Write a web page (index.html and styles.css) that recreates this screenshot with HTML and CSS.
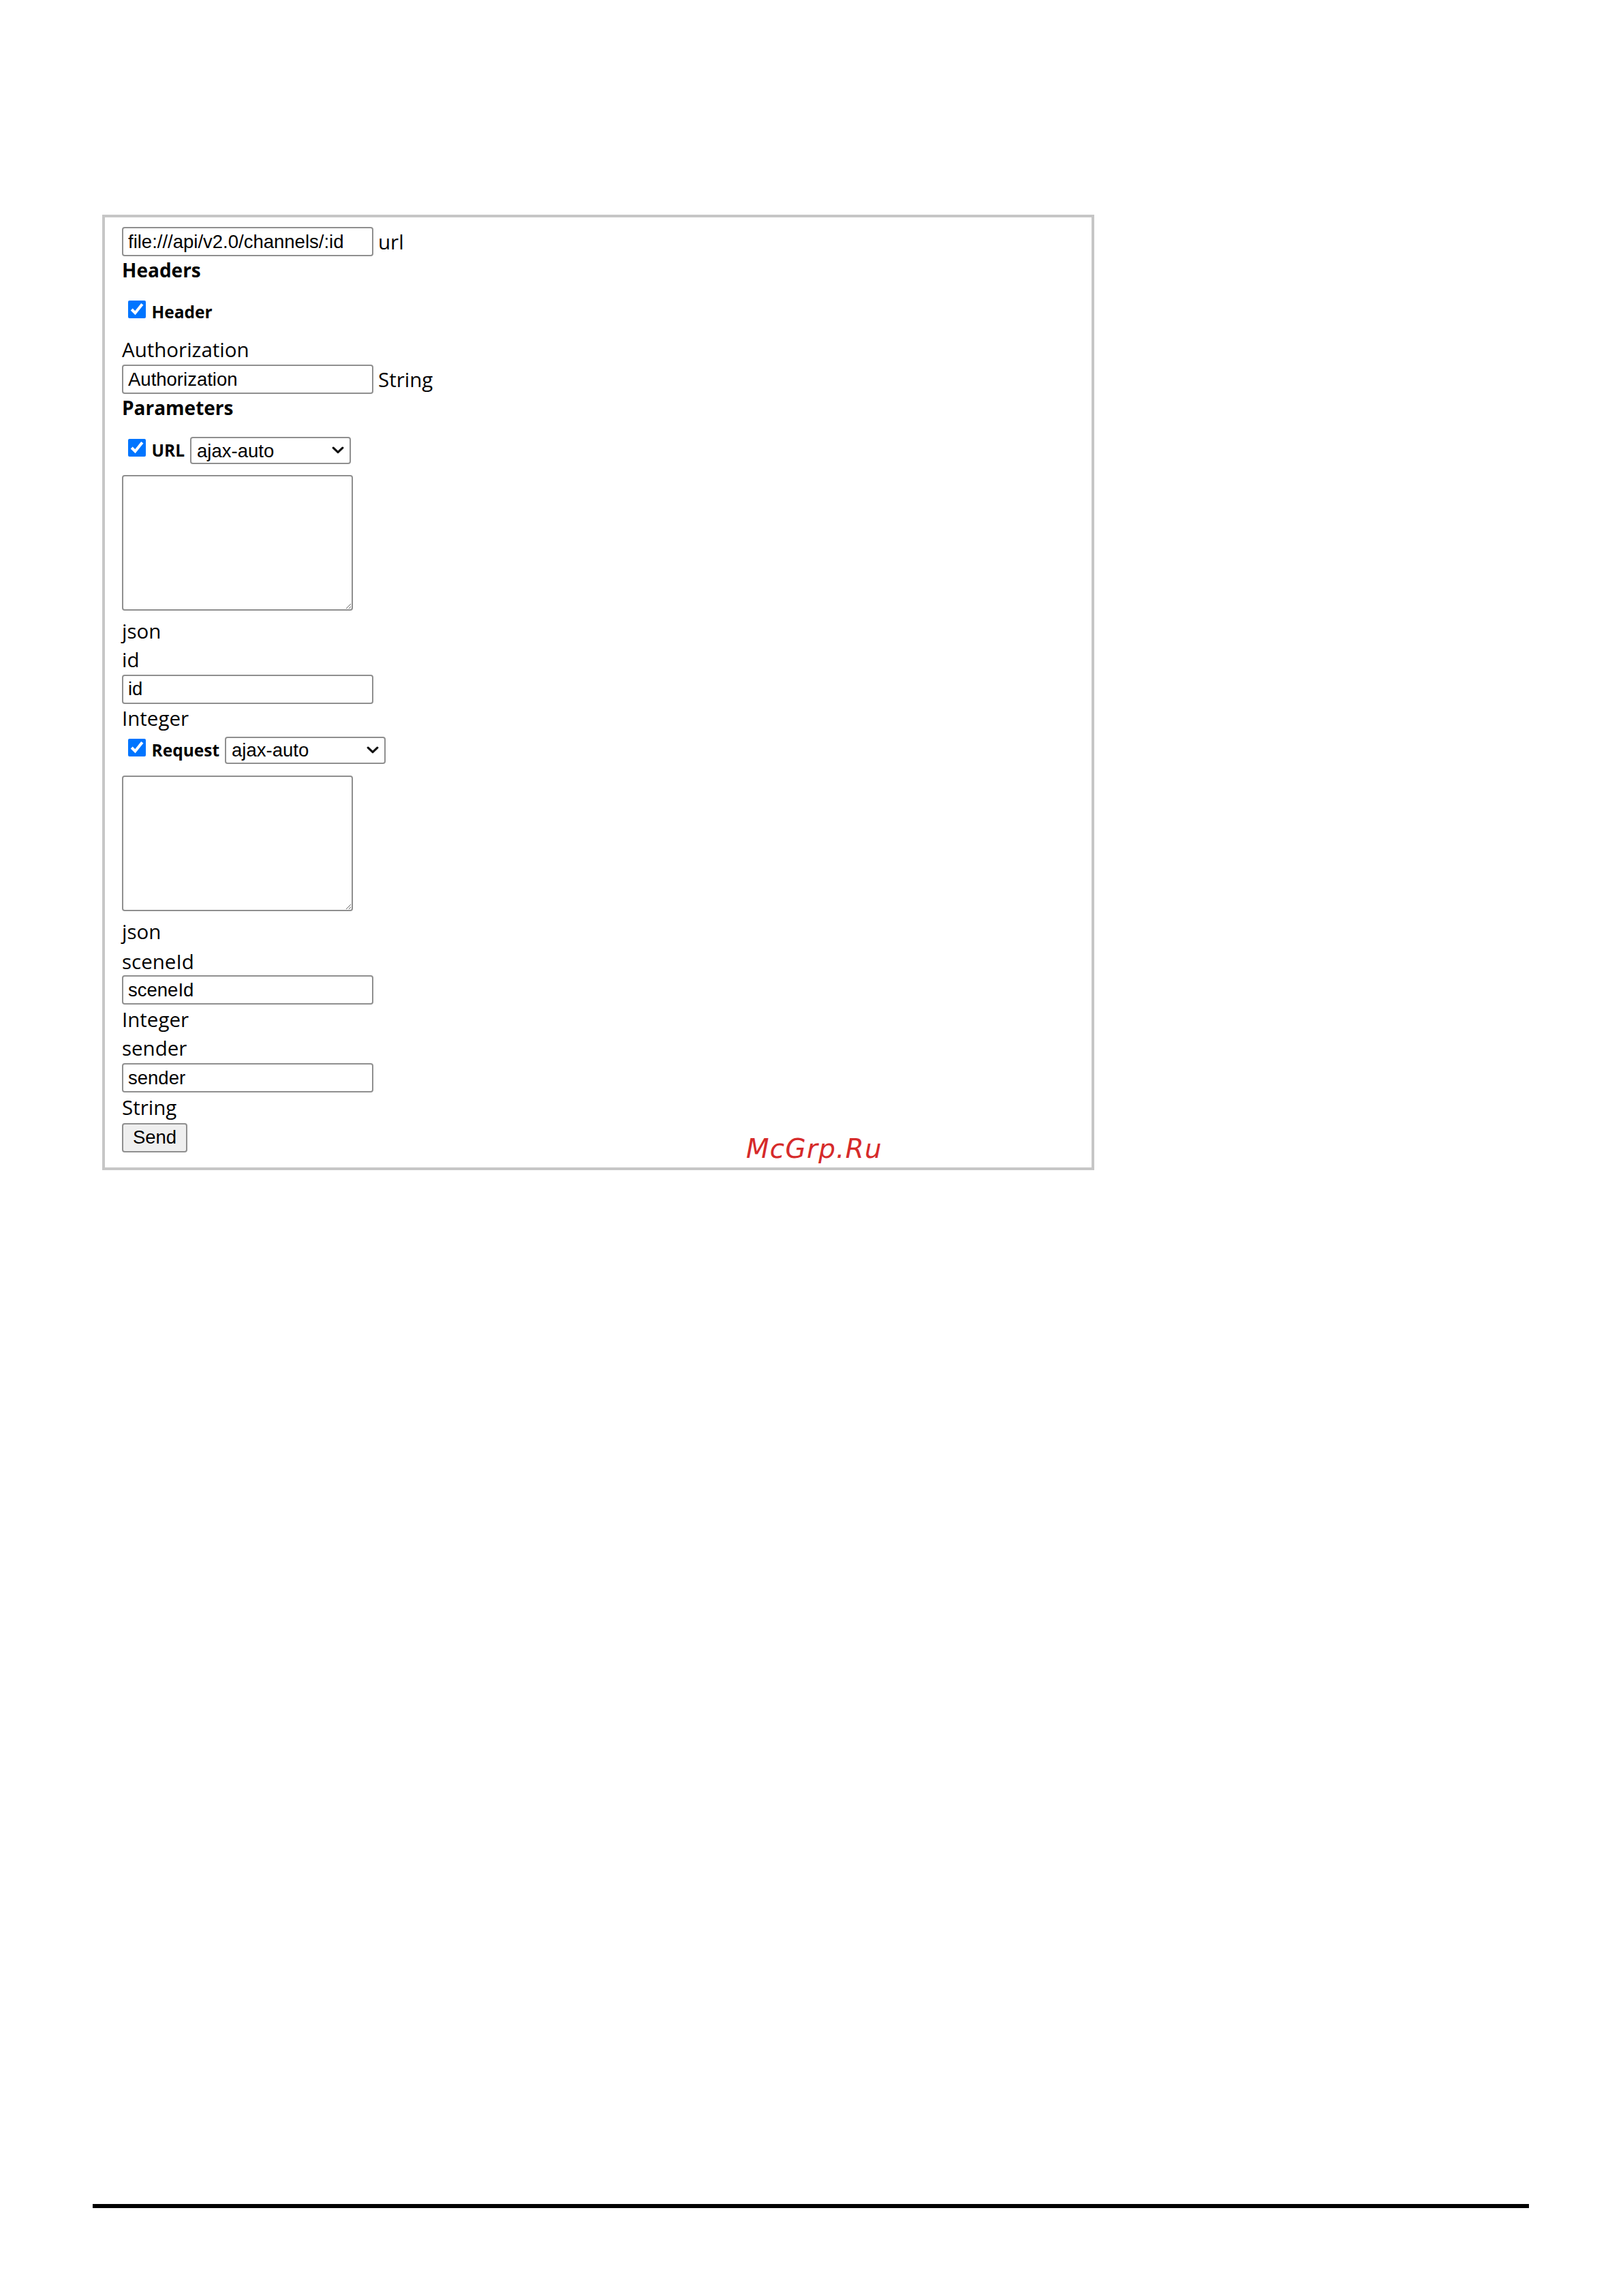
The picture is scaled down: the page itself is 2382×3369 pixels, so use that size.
FILE: index.html
```html
<!DOCTYPE html>
<html lang="en">
<head>
<meta charset="utf-8">
<title>API request form</title>
<link rel="stylesheet" href="styles.css">
</head>
<body>
<div class="frame">
  <div class="field-row">
    <input class="text-input" type="text" value="file:///api/v2.0/channels/:id">
    <span class="label">url</span>
  </div>
  <div class="heading">Headers</div>
  <div class="check-row check-row--header">
    <input class="check" type="checkbox" checked>
    <span class="check-label">Header</span>
  </div>
  <div class="label">Authorization</div>
  <div class="field-row field-row--after-label">
    <input class="text-input" type="text" value="Authorization">
    <span class="label">String</span>
  </div>
  <div class="heading">Parameters</div>
  <div class="check-row check-row--url">
    <input class="check" type="checkbox" checked>
    <span class="check-label">URL</span>
    <span class="select-wrap">
      <select class="select"><option>ajax-auto</option></select>
      <svg class="chevron" viewBox="0 0 18 11" aria-hidden="true"><polyline points="2.2,2.2 9,8.6 15.8,2.2" fill="none" stroke="#111" stroke-width="3.2" stroke-linecap="round" stroke-linejoin="round"/></svg>
    </span>
  </div>
  <textarea class="json-area json-area--url"></textarea>
  <div class="label label--after-area">json</div>
  <div class="label">id</div>
  <div class="field-row field-row--after-label">
    <input class="text-input" type="text" value="id">
  </div>
  <div class="label">Integer</div>
  <div class="check-row check-row--request">
    <input class="check" type="checkbox" checked>
    <span class="check-label">Request</span>
    <span class="select-wrap">
      <select class="select"><option>ajax-auto</option></select>
      <svg class="chevron" viewBox="0 0 18 11" aria-hidden="true"><polyline points="2.2,2.2 9,8.6 15.8,2.2" fill="none" stroke="#111" stroke-width="3.2" stroke-linecap="round" stroke-linejoin="round"/></svg>
    </span>
  </div>
  <textarea class="json-area json-area--request"></textarea>
  <div class="label label--after-area">json</div>
  <div class="label label--scene">sceneId</div>
  <div class="field-row">
    <input class="text-input" type="text" value="sceneId">
  </div>
  <div class="label label--spaced">Integer</div>
  <div class="label label--spaced">sender</div>
  <div class="field-row field-row--after-label">
    <input class="text-input" type="text" value="sender">
  </div>
  <div class="label label--spaced">String</div>
  <button class="send" type="button">Send</button>
  <div class="watermark">McGrp.Ru</div>
</div>
<div class="page-rule"></div>
</body>
</html>
```

FILE: styles.css
```css
* {
  box-sizing: border-box;
}

body {
  margin: 0;
  padding-top: 315px;
  background: #fff;
  color: #000;
  font-family: "Open Sans", "Noto Sans", sans-serif;
}

.frame {
  position: relative;
  margin-left: 150px;
  width: 1456px;
  border: 4px solid #c6c6c6;
  padding: 14px 0 22px 25px;
}

.field-row {
  display: flex;
  align-items: center;
  gap: 7px;
  height: 43px;
}

.field-row--after-label {
  margin-top: 1.5px;
}

.text-input {
  width: 369px;
  height: 43px;
  margin: 0;
  padding: 0 7px;
  border: 2px solid #8f8f8f;
  border-radius: 4px;
  background: #fff;
  color: #000;
  font: 27.5px "Liberation Sans", Arial, sans-serif;
}

.label {
  font-size: 29.5px;
  line-height: 41.5px;
}

.label--after-area {
  margin-top: 9.4px;
}

.label--scene {
  margin-top: 2px;
}

.label--spaced {
  margin-top: 0.7px;
}

.heading {
  font-size: 28px;
  font-weight: 700;
  line-height: 41.5px;
}

.check-row {
  display: flex;
  align-items: center;
  height: 40px;
}

.check-row--header {
  margin: 20.5px 0 14px;
}

.check-row--url {
  margin-top: 21.5px;
}

.check-row--request {
  margin-top: 6.5px;
}

.check {
  width: 26px;
  height: 26px;
  margin: 0 9px 8px 8.5px;
  accent-color: #0075ff;
}

.check-label {
  font-size: 24.5px;
  font-weight: 700;
  line-height: 40px;
}

.select-wrap {
  position: relative;
  display: inline-block;
  margin-left: 8px;
  height: 40px;
}

.select {
  appearance: none;
  -webkit-appearance: none;
  width: 236px;
  height: 40px;
  margin: 0;
  padding: 0 0 0 8px;
  border: 2px solid #8f8f8f;
  border-radius: 4px;
  background: #fff;
  color: #000;
  font: 27.5px "Liberation Sans", Arial, sans-serif;
}

.chevron {
  position: absolute;
  right: 10px;
  top: 14px;
  width: 18px;
  height: 11px;
  pointer-events: none;
}

.json-area {
  display: block;
  width: 339px;
  height: 199px;
  margin: 16px 0 0;
  border: 2px solid #8f8f8f;
  border-radius: 4px;
  background: #fff;
  resize: both;
}

.json-area--request {
  margin-top: 17px;
}

.send {
  display: block;
  width: 96px;
  height: 43px;
  margin-top: 2.5px;
  padding: 0;
  border: 2px solid #8f8f8f;
  border-radius: 4px;
  background: #efefef;
  color: #000;
  font: 27.5px "Liberation Sans", Arial, sans-serif;
}

.watermark {
  position: absolute;
  left: 941px;
  top: 1347px;
  color: #d62a2a;
  font: italic 39px/1 "DejaVu Sans", sans-serif;
  letter-spacing: 1.2px;
}

.page-rule {
  width: 2108px;
  height: 6px;
  margin: 1517px 0 0 136px;
  background: #000;
}
```
